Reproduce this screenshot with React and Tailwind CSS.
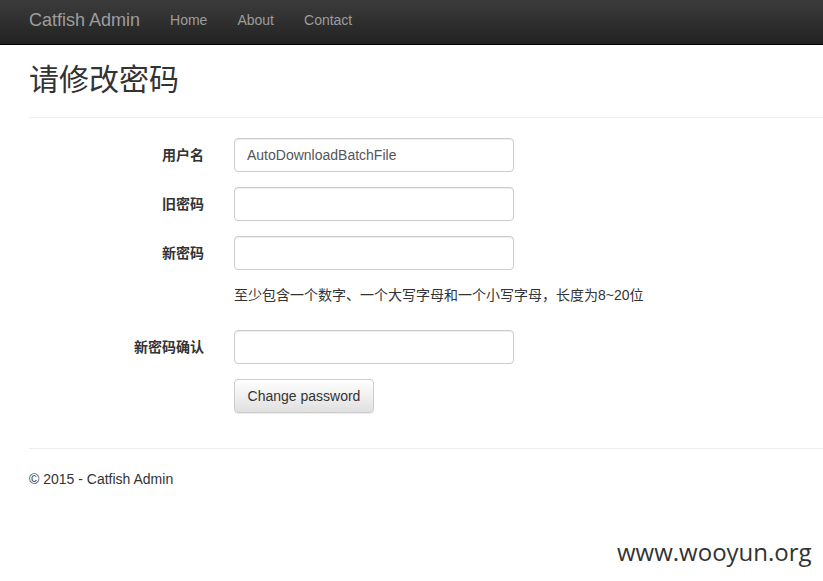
export default function App() {
  const font = { fontFamily: '"Liberation Sans", "Noto Sans CJK SC", sans-serif' };
  const fields = [
    { label: "用户名", value: "AutoDownloadBatchFile" },
    { label: "旧密码", value: "" },
    { label: "新密码", value: "" },
  ];

  return (
    <div className="relative min-h-[581px] bg-white text-[14px] leading-[20px] text-[#333]" style={font}>
      <div className="flex h-[45px] items-center border-b border-black bg-gradient-to-b from-[#3c3c3c] to-[#222222] pb-[5px] pl-[14px]">
        <span className="px-[15px] text-[18px] text-[#9d9d9d]">Catfish Admin</span>
        <a className="px-[15px] text-[#9d9d9d]">Home</a>
        <a className="px-[15px] text-[#9d9d9d]">About</a>
        <a className="px-[15px] text-[#9d9d9d]">Contact</a>
      </div>

      <div className="pl-[29px]">
        <h2 className="mt-[18px] text-[30px] leading-[33px] font-normal text-[#333]">请修改密码</h2>
        <hr className="mt-[21px] border-t border-[#eee]" />

        <div className="mt-[20px] flex flex-col">
          {fields.map((f) => (
            <div key={f.label} className="mb-[15px] flex items-center gap-[30px]">
              <label className="w-[175px] text-right font-bold">{f.label}</label>
              <input
                type="text"
                readOnly
                defaultValue={f.value}
                className="h-[34px] w-[280px] rounded-[4px] border border-[#ccc] px-[12px] text-[14px] text-[#555] shadow-[inset_0_1px_1px_rgba(0,0,0,0.075)] outline-none"
              />
            </div>
          ))}
          <div className="mb-[25px] pl-[205px]">至少包含一个数字、一个大写字母和一个小写字母，长度为8~20位</div>
          <div className="mb-[15px] flex items-center gap-[30px]">
            <label className="w-[175px] text-right font-bold">新密码确认</label>
            <input
              type="text"
              readOnly
              className="h-[34px] w-[280px] rounded-[4px] border border-[#ccc] px-[12px] text-[14px] text-[#555] shadow-[inset_0_1px_1px_rgba(0,0,0,0.075)] outline-none"
            />
          </div>
          <div className="pl-[205px]">
            <button className="h-[34px] w-[140px] rounded-[4px] border border-[#ccc] bg-gradient-to-b from-white to-[#e0e0e0] text-[14px] text-[#333] shadow-[inset_0_1px_0_rgba(255,255,255,0.15),0_1px_1px_rgba(0,0,0,0.075)]">
              Change password
            </button>
          </div>
        </div>

        <hr className="mt-[35px] border-t border-[#eee]" />
        <footer className="mt-[20px]">© 2015 - Catfish Admin</footer>
      </div>

      <div
        className="absolute left-[617px] top-[537px] text-[24px] leading-[30px] text-[#333]"
        style={{ fontFamily: '"Open Sans", sans-serif' }}
      >
        www.wooyun.org
      </div>
    </div>
  );
}
